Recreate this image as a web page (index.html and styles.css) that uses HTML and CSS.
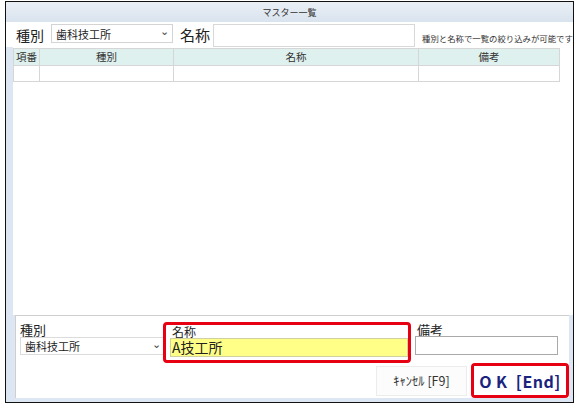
FILE: index.html
```html
<!DOCTYPE html>
<html lang="ja">
<head>
  <meta charset="UTF-8">
  <title>マスター一覧</title>
  <link rel="stylesheet" href="styles.css">
</head>
<body>
  <div class="window">
    <div class="titlebar">マスター一覧</div>

    <div class="filter">
      <span class="filter-label">種別</span>
      <div class="select filter-select">
        <span>歯科技工所</span>
        <span class="chevron">&#8964;</span>
      </div>
      <span class="filter-label name-label">名称</span>
      <div class="textbox filter-name"></div>
      <span class="hint">種別と名称で一覧の絞り込みが可能です</span>
    </div>

    <div class="body">
      <div class="list">
        <table class="grid">
          <thead>
            <tr>
              <th class="col-no">項番</th>
              <th class="col-kind">種別</th>
              <th class="col-name">名称</th>
              <th class="col-memo">備考</th>
            </tr>
          </thead>
          <tbody>
            <tr>
              <td></td>
              <td></td>
              <td></td>
              <td></td>
            </tr>
          </tbody>
        </table>
      </div>

      <div class="editor">
        <div class="fields">
          <div class="field field-kind">
            <label>種別</label>
            <div class="select edit-select">
              <span>歯科技工所</span>
              <span class="chevron">&#8964;</span>
            </div>
          </div>
          <div class="field field-name focus-frame">
            <label>名称</label>
            <div class="textbox edit-name">A技工所</div>
          </div>
          <div class="field field-memo">
            <label>備考</label>
            <div class="textbox edit-memo"></div>
          </div>
        </div>
        <div class="actions">
          <button class="btn-cancel">ｷｬﾝｾﾙ [F9]</button>
          <div class="focus-frame ok-frame">
            <button class="btn-ok">O K&nbsp; [End]</button>
          </div>
        </div>
      </div>
    </div>
  </div>
</body>
</html>
```

FILE: styles.css
```css
* {
  box-sizing: border-box;
}

body {
  margin: 0;
  background: #fff;
  font-family: "Noto Sans CJK JP", "Noto Sans", sans-serif;
  color: #222;
}

.window {
  margin: 1px 0 0 5px;
  width: 569px;
  height: 402px;
  border: 1px solid #111;
  background: #dce7f3;
  display: flex;
  flex-direction: column;
}

.titlebar {
  height: 20px;
  background: linear-gradient(#eaeff5, #d9e3ee);
  font-size: 9px;
  line-height: 22px;
  text-align: center;
  color: #333;
}

/* filter row */
.filter {
  height: 25px;
  background: #fff;
  display: flex;
  align-items: center;
  padding-left: 10px;
  overflow: hidden;
}

.filter > * {
  flex-shrink: 0;
  white-space: nowrap;
}

.filter-label {
  font-size: 14px;
  line-height: 1;
}

.name-label {
  margin-left: 7px;
  font-size: 15px;
}

.select {
  display: flex;
  align-items: center;
  justify-content: space-between;
  border: 1px solid #d4d4d4;
  background: #fff;
  font-size: 11px;
  padding: 0 3px 0 4px;
  white-space: nowrap;
}

.chevron {
  font-size: 11px;
  line-height: 1;
  margin-top: -6px;
  color: #444;
}

.filter-select {
  margin-left: 7px;
  width: 122px;
  height: 19px;
  margin-top: -2px;
}

.textbox {
  border: 1px solid #c8c8c8;
  background: #fff;
}

.filter-name {
  margin-left: 3px;
  width: 202px;
  height: 23px;
  margin-top: 1px;
  border-color: #d8d8d8;
}

.hint {
  align-self: flex-end;
  margin-left: 7px;
  margin-bottom: 3px;
  font-size: 8.4px;
  color: #333;
}

/* list + editor */
.body {
  flex: 1;
  display: flex;
  flex-direction: column;
  padding: 0 0 4px 7px;
}

.list {
  flex: 1;
  background: #fff;
  padding-top: 1px;
}

.grid {
  border-collapse: collapse;
  table-layout: fixed;
  width: 546px;
}

.grid th,
.grid td {
  border: 1px solid #d6d6d6;
  padding: 0;
}

.grid th {
  height: 17px;
  background: #dff1ee;
  font-size: 10.5px;
  font-weight: normal;
  color: #333;
  line-height: 1;
}

.grid td {
  height: 16px;
}

.col-no { width: 26px; }
.col-kind { width: 134px; }
.col-name { width: 245px; }
.col-memo { width: 141px; }

.editor {
  height: 83px;
  margin: 0 4px 0 2px;
  background: #fff;
  border-top: 1px solid #cfcfcf;
  border-left: 1px solid #cfcfcf;
  display: flex;
  flex-direction: column;
}

.fields {
  display: flex;
  align-items: flex-start;
  padding-top: 6px;
}

.field {
  display: flex;
  flex-direction: column;
}

.field label {
  font-size: 13px;
  line-height: 13px;
  white-space: nowrap;
}

.field-kind {
  margin-left: 4px;
  padding-top: 1px;
}

.edit-select {
  width: 145px;
  height: 18px;
  margin-top: 1px;
  border-color: #dcdcdc;
}

.focus-frame {
  border: 3px solid #e60012;
  border-radius: 4px;
}

.field-name {
  margin-left: -2px;
  width: 248px;
  height: 41px;
  padding: 0 0 0 4px;
}

.field-name label {
  padding-left: 2px;
  height: 13px;
  line-height: 13px;
  font-size: 12px;
}

.edit-name {
  width: 238px;
  height: 19px;
  background: #ffff88;
  border-color: #d0d0a0;
  font-size: 14px;
  line-height: 17px;
  padding-left: 1px;
}

.field-memo {
  margin-left: 5px;
  padding-top: 1px;
}

.field-memo label {
  padding-left: 1px;
}

.edit-memo {
  width: 143px;
  height: 19px;
  margin-left: -1px;
  border-color: #a9a9a9;
}

.actions {
  display: flex;
  justify-content: flex-end;
  align-items: center;
  gap: 4px;
  height: 35px;
}

.actions button {
  font-family: "Noto Sans CJK JP", "Noto Sans", sans-serif;
  cursor: pointer;
}

.btn-cancel {
  width: 91px;
  height: 30px;
  border: 1px solid #ececec;
  background: #fcfcfc;
  font-size: 12.5px;
  color: #333;
  padding: 0;
}

.ok-frame {
  width: 98px;
  height: 35px;
  display: flex;
}

.btn-ok {
  flex: 1;
  border: none;
  background: #fff;
  font-size: 16px;
  font-weight: bold;
  color: #1a237e;
  letter-spacing: 0.5px;
  padding: 0;
}
```
